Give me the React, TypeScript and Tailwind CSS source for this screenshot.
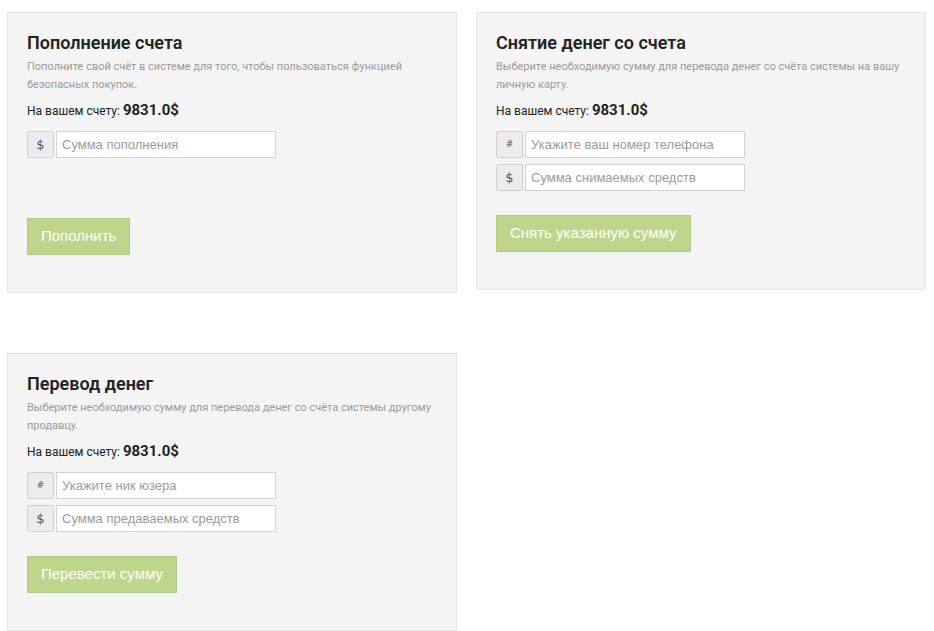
const BALANCE = "9831.0$";

type Field = { addon: string; placeholder: string };

function InputRow({ addon, placeholder }: Field) {
  return (
    <div className="flex h-[27px]">
      <span
        className={`flex w-[27px] items-center justify-center rounded-[2px] border border-[#cfcfcf] bg-[#ececec] text-[#555] ${
          addon === "#" ? "text-[9px]" : "text-[13px]"
        }`}
        style={{ fontFamily: '"DejaVu Sans", sans-serif' }}
      >
        {addon}
      </span>
      <input
        type="text"
        placeholder={placeholder}
        className="ml-[2px] w-[220px] border border-[#d2d2d2] bg-white pl-[5px] text-[13px] text-[#333] placeholder:text-[#9a9a9a] focus:outline-none"
        style={{ fontFamily: '"Liberation Sans", Arial, sans-serif' }}
      />
    </div>
  );
}

function Card({
  title,
  text,
  fields,
  button,
  buttonGap,
}: {
  title: string;
  text: string;
  fields: Field[];
  button: string;
  buttonGap: string;
}) {
  return (
    <section className="border border-[#e4e4e4] bg-[#f4f4f4] pl-[19px] pr-5 pt-[19px] pb-[37px]">
      <h2 className="text-[18px] font-semibold leading-[22px] text-[#222]">{title}</h2>
      <p className="mt-[4px] text-[11px] leading-[18px] text-[#9a9a9a]">{text}</p>
      <p className="mt-[7px] text-[12px] leading-[18px] text-[#222]">
        На вашем счету: <b className="text-[15px] text-[#222]">{BALANCE}</b>
      </p>
      <div className="mt-[11px] flex flex-col gap-[6px]">
        {fields.map((f) => (
          <InputRow key={f.placeholder} {...f} />
        ))}
      </div>
      <button
        type="button"
        className={`${buttonGap} h-[37px] border border-[#b0c985] bg-[#bdd68b] px-[13px] text-[15px] text-white`}
        style={{ fontFamily: '"Liberation Sans", Arial, sans-serif' }}
      >
        {button}
      </button>
    </section>
  );
}

export default function App() {
  return (
    <main
      className="min-h-screen w-full bg-white"
      style={{ fontFamily: 'Roboto, "Noto Sans", sans-serif' }}
    >
      <div className="ml-[7px] grid w-[919px] grid-cols-2 items-start gap-x-[19px] gap-y-[60px] pt-[12px]">
        <Card
          title="Пополнение счета"
          text="Пополните свой счёт в системе для того, чтобы пользоваться функцией безопасных покупок."
          fields={[{ addon: "$", placeholder: "Сумма пополнения" }]}
          button="Пополнить"
          buttonGap="mt-[60px]"
        />
        <Card
          title="Снятие денег со счета"
          text="Выберите необходимую сумму для перевода денег со счёта системы на вашу личную карту."
          fields={[
            { addon: "#", placeholder: "Укажите ваш номер телефона" },
            { addon: "$", placeholder: "Сумма снимаемых средств" },
          ]}
          button="Снять указанную сумму"
          buttonGap="mt-[24px]"
        />
        <Card
          title="Перевод денег"
          text="Выберите необходимую сумму для перевода денег со счёта системы другому продавцу."
          fields={[
            { addon: "#", placeholder: "Укажите ник юзера" },
            { addon: "$", placeholder: "Сумма предаваемых средств" },
          ]}
          button="Перевести сумму"
          buttonGap="mt-[24px]"
        />
      </div>
    </main>
  );
}
